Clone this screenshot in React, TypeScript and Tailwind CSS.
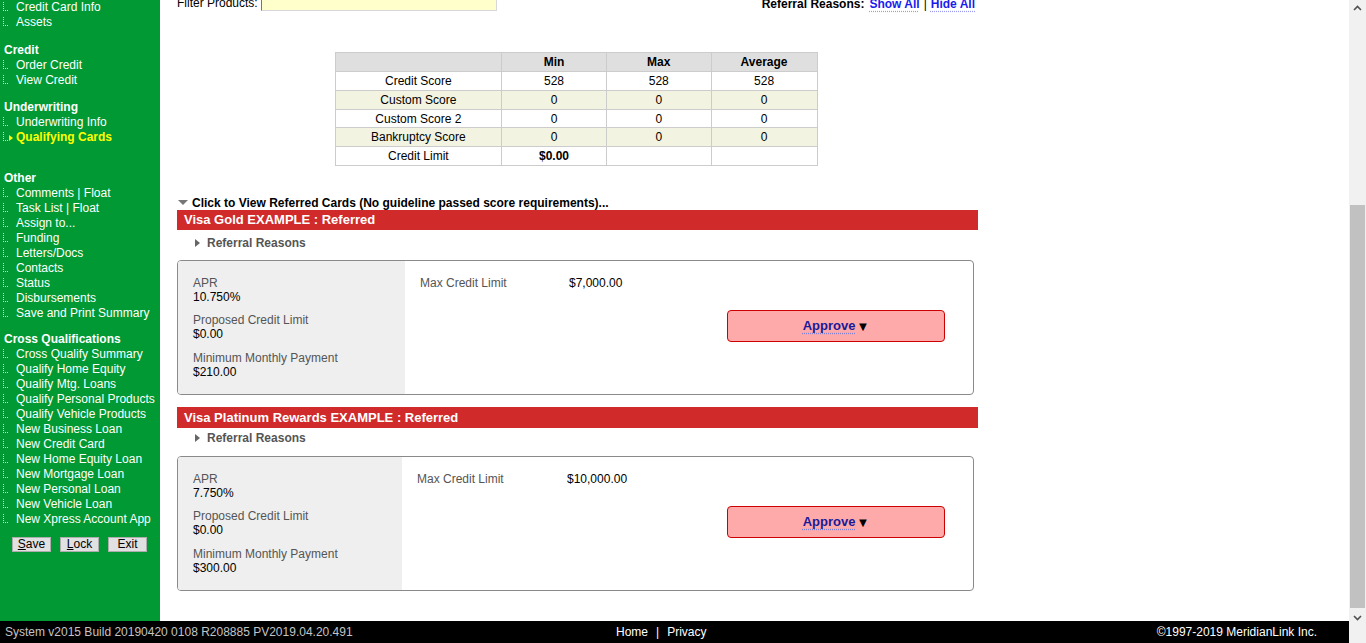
import React from 'react'

type NavGroup = { title?: string; gap: string; items: string[] }

const NAV: NavGroup[] = [
  { gap: 'mt-0', items: ['Credit Card Info', 'Assets'] },
  { title: 'Credit', gap: 'mt-[13px]', items: ['Order Credit', 'View Credit'] },
  { title: 'Underwriting', gap: 'mt-[12px]', items: ['Underwriting Info', 'Qualifying Cards'] },
  {
    title: 'Other',
    gap: 'mt-[26px]',
    items: ['Comments | Float', 'Task List | Float', 'Assign to...', 'Funding', 'Letters/Docs', 'Contacts', 'Status', 'Disbursements', 'Save and Print Summary'],
  },
  {
    title: 'Cross Qualifications',
    gap: 'mt-[11px]',
    items: [
      'Cross Qualify Summary', 'Qualify Home Equity', 'Qualify Mtg. Loans', 'Qualify Personal Products',
      'Qualify Vehicle Products', 'New Business Loan', 'New Credit Card', 'New Home Equity Loan',
      'New Mortgage Loan', 'New Personal Loan', 'New Vehicle Loan', 'New Xpress Account App',
    ],
  },
]

const ACTIVE = 'Qualifying Cards'

const SCORES = [
  { label: 'Credit Score', min: '528', max: '528', avg: '528' },
  { label: 'Custom Score', min: '0', max: '0', avg: '0' },
  { label: 'Custom Score 2', min: '0', max: '0', avg: '0' },
  { label: 'Bankruptcy Score', min: '0', max: '0', avg: '0' },
  { label: 'Credit Limit', min: '$0.00', max: '', avg: '' },
]

const CARDS = [
  { name: 'Visa Gold EXAMPLE : Referred', apr: '10.750%', min: '$210.00', max: '$7,000.00', left: 'w-[227px]', lbl: 'w-[149px]', mt: 'mt-0', bar: 'h-[20px]', rr: 'mt-[6px]', box: 'mt-[9px]' },
  { name: 'Visa Platinum Rewards EXAMPLE : Referred', apr: '7.750%', min: '$300.00', max: '$10,000.00', left: 'w-[224px]', lbl: 'w-[150px]', mt: 'mt-[12px]', bar: 'h-[21px]', rr: 'mt-[3px]', box: 'mt-[10px]' },
]

function TreeDot() {
  return <span className="w-[5px] h-[9px] border-l border-b border-dotted border-white/80 shrink-0 mt-[-3px]" />
}

function Sidebar() {
  return (
    <div className="w-[160px] h-full bg-[#009933] overflow-hidden text-[12px] leading-[15px] text-white">
      <div className="mt-0">
        {NAV.map((g, gi) => (
          <div key={gi} className={g.gap}>
            {g.title && <div className="pl-[4px] font-bold">{g.title}</div>}
            {g.items.map(it => (
              <div key={it} className="flex items-center pl-[3px] h-[15px] whitespace-nowrap">
                <TreeDot />
                {it === ACTIVE ? (
                  <>
                    <span className="ml-[1px] w-0 h-0 border-y-[3px] border-y-transparent border-l-[4px] border-l-[#ffff00]" />
                    <span className="ml-[3px] text-[#ffff00] font-bold">{it}</span>
                  </>
                ) : (
                  <span className="ml-[8px]">{it}</span>
                )}
              </div>
            ))}
          </div>
        ))}
        <div className="mt-[10px] flex gap-[9px] pl-[12px]">
          {[['S', 'ave'], ['L', 'ock'], ['', 'Exit']].map(([u, r]) => (
            <button key={r} className="w-[39px] h-[15px] bg-[#e1e1e1] border border-[#adadad] text-black text-[12px] leading-[13px] flex items-center justify-center">
              {u && <span className="underline">{u}</span>}{r}
            </button>
          ))}
        </div>
      </div>
    </div>
  )
}

function ScoreTable() {
  return (
    <table className="mx-auto mt-[41px] border-collapse text-[12px] leading-[14px] text-black w-[483px]">
      <thead>
        <tr className="bg-[#dfdfdf] h-[19.4px]">
          <th className="w-[167px] border border-[#cccccc] p-0" />
          <th className="w-[105px] border border-[#cccccc] font-bold p-0">Min</th>
          <th className="w-[105px] border border-[#cccccc] font-bold p-0">Max</th>
          <th className="w-[106px] border border-[#cccccc] font-bold p-0">Average</th>
        </tr>
      </thead>
      <tbody>
        {SCORES.map((r, i) => (
          <tr key={r.label} className={`h-[18.7px] ${i % 2 === 1 ? 'bg-[#f3f3e1]' : 'bg-white'}`}>
            <td className="border border-[#cccccc] text-center p-0">{r.label}</td>
            <td className={`border border-[#cccccc] text-center p-0 ${r.label === 'Credit Limit' ? 'font-bold' : ''}`}>{r.min}</td>
            <td className="border border-[#cccccc] text-center p-0">{r.max}</td>
            <td className="border border-[#cccccc] text-center p-0">{r.avg}</td>
          </tr>
        ))}
      </tbody>
    </table>
  )
}

function CardBlock({ c }: { c: typeof CARDS[number] }) {
  return (
    <div className={c.mt}>
      <div className={`${c.bar} bg-[#d02a2a] text-white font-bold text-[13px] flex items-center pl-[7px] w-[801px]`}>{c.name}</div>
      <div className={`flex items-center h-[15px] ${c.rr} pl-[18px] text-[12px] font-bold text-[#555555]`}>
        <span className="w-0 h-0 border-y-[4px] border-y-transparent border-l-[5px] border-l-[#666666]" />
        <span className="ml-[7px]">Referral Reasons</span>
      </div>
      <div className={`${c.box} w-[797px] h-[135px] border border-[#8a8a8a] rounded-[4px] flex overflow-hidden text-[12px] leading-[14px]`}>
        <div className={`${c.left} bg-[#efefef] pl-[15px] pt-[15px]`}>
          <div className="text-[#555555]">APR</div>
          <div className="text-black">{c.apr}</div>
          <div className="text-[#555555] mt-[9px]">Proposed Credit Limit</div>
          <div className="text-black">$0.00</div>
          <div className="text-[#555555] mt-[10px]">Minimum Monthly Payment</div>
          <div className="text-black">{c.min}</div>
        </div>
        <div className="flex-1 flex pl-[15px] pt-[15px] pr-[28px]">
          <div className="flex flex-1">
            <div className={`${c.lbl} text-[#555555]`}>Max Credit Limit</div>
            <div className="text-black">{c.max}</div>
          </div>
          <div className="self-center -mt-[17px] w-[218px] h-[32px] bg-[#ffaaaa] border border-[#cc0000] rounded-[4px] flex items-center justify-center gap-[1px]">
            <span className="font-bold text-[13px] text-[#1a1a99] underline decoration-dotted decoration-[#8080cc] underline-offset-[3px]">Approve</span>
            <span className="text-[13px] leading-[13px] text-black">▼</span>
          </div>
        </div>
      </div>
    </div>
  )
}

function Content() {
  return (
    <div className="flex-1 h-full bg-white overflow-hidden pl-[17px] text-[12px] font-['Liberation_Sans',Arial,sans-serif]">
      <div className="w-[798px]">
        <div className="-mt-[7px] h-[18px] flex items-center justify-between">
          <div className="flex items-center">
            <span className="text-black mt-[2px]">Filter Products:</span>
            <span className="ml-[3px] w-[236px] h-[18px] bg-[#ffffcc] border border-[#d8d8d8] border-l-[#777777]" />
          </div>
          <div className="flex items-center font-bold text-black mt-[4px]">
            <span>Referral Reasons:</span>
            <span className="ml-[5px] text-[#1b1bee] underline decoration-dotted decoration-[#9999ee] underline-offset-[3px]">Show All</span>
            <span className="mx-[4px] font-normal">|</span>
            <span className="text-[#1b1bee] underline decoration-dotted decoration-[#9999ee] underline-offset-[3px]">Hide All</span>
          </div>
        </div>
        <ScoreTable />
        <div className="mt-[30px] h-[14px] flex items-center font-bold text-black">
          <span className="ml-[1px] w-0 h-0 border-x-[5px] border-x-transparent border-t-[5px] border-t-[#777777]" />
          <span className="ml-[4px]">Click to View Referred Cards (No guideline passed score requirements)...</span>
        </div>
        <div className="mt-0">
          {CARDS.map(c => <CardBlock key={c.name} c={c} />)}
        </div>
      </div>
    </div>
  )
}

function Scrollbar() {
  return (
    <div className="w-[17px] h-[643px] bg-[#f1f1f1] flex flex-col items-center">
      <div className="h-[15px] w-full flex items-center justify-center">
        <svg width="9" height="6" viewBox="0 0 9 6"><path d="M1 5 L4.5 1.5 L8 5" fill="none" stroke="#505050" strokeWidth="1.6" /></svg>
      </div>
      <div className="mt-[190px] w-[15px] h-[403px] bg-[#c1c1c1]" />
      <div className="mt-[2px] h-[15px] w-full flex items-center justify-center">
        <svg width="9" height="6" viewBox="0 0 9 6"><path d="M1 1 L4.5 4.5 L8 1" fill="none" stroke="#505050" strokeWidth="1.6" /></svg>
      </div>
    </div>
  )
}

export default function App() {
  return (
    <div className="w-[1366px] h-[643px] flex overflow-hidden font-['Liberation_Sans',Arial,sans-serif]">
      <div className="w-[1349px] flex flex-col">
        <div className="h-[621px] flex">
          <Sidebar />
          <Content />
        </div>
        <div className="h-[22px] bg-black flex items-center text-[12px] pl-[5px] pr-[32px]">
          <span className="text-[#c4c4c4] w-[611px]">System v2015 Build 20190420 0108 R208885 PV2019.04.20.491</span>
          <span className="text-white">Home</span>
          <span className="text-white mx-[8px]">|</span>
          <span className="text-white">Privacy</span>
          <span className="ml-auto text-white">©1997-2019 MeridianLink Inc.</span>
        </div>
      </div>
      <Scrollbar />
    </div>
  )
}
